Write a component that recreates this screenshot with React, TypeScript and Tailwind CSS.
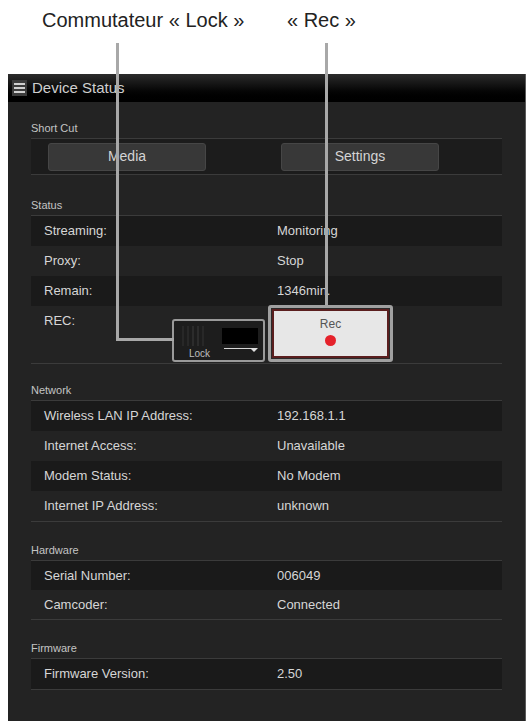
import React from 'react';

const font = { fontFamily: '"Liberation Sans", Arial, sans-serif' };

type Row = { label: string; value: string };

const SectionLabel = ({ title, top }: { title: string; top: string }) => (
    <div className={`h-[20px] ${top} flex items-center pl-[23px] text-[11px] text-[#c4c4c4]`}>
        {title}
    </div>
);

const InfoRows = ({ rows, rowH = 'h-[30px]' }: { rows: Row[]; rowH?: string }) => (
    <div className="mx-[23px] border-t border-b border-[#3b3b3b]">
        {rows.map((r, i) => (
            <div
                key={r.label}
                className={`${rowH} flex items-center text-[13px] text-[#d6d6d6] ${i % 2 === 0 ? 'bg-[#1a1a1a]' : ''}`}
            >
                <div className="w-[246px] pl-[13px]">{r.label}</div>
                <div>{r.value}</div>
            </div>
        ))}
    </div>
);

const LockSwitch = () => (
    <div className="relative w-[93px] h-[43px] mt-[13px] rounded-[3px] border-2 border-[#9a9a9a] bg-[#1d1d1d]">
        {/* faint stripes */}
        <div className="absolute left-[8px] top-[5px] w-[32px] h-[20px] flex gap-[3px] opacity-40">
            <div className="w-[2px] h-full bg-[#3a3a3a]" />
            <div className="w-[2px] h-full bg-[#3a3a3a]" />
            <div className="w-[2px] h-full bg-[#444]" />
            <div className="w-[2px] h-full bg-[#444]" />
            <div className="w-[2px] h-full bg-[#3a3a3a]" />
        </div>
        <div className="absolute left-[48px] top-[7px] w-[36px] h-[16px] bg-black" />
        <div className="absolute left-[50px] top-[27px] w-[30px] h-[1px] bg-[#d8d8d8]" />
        <svg className="absolute left-[76px] top-[25px]" width="8" height="6" viewBox="0 0 8 6">
            <polygon points="0,2 8,2 4,6" fill="#e0e0e0" />
        </svg>
        <div className="absolute left-[15px] top-[27px] text-[10px] text-[#bdbdbd] leading-[12px]">Lock</div>
    </div>
);

const RecButton = () => (
    <div className="w-[125px] h-[57px] -mt-[1px] ml-[3px] rounded-[3px] border-[3px] border-[#a0a0a0] p-[1px] bg-[#2a2a2a]">
        <div className="w-full h-full border-2 border-[#5b1f1f] bg-[#e7e7e7] flex flex-col items-center pt-[6px]">
            <div className="text-[12px] text-[#555] leading-[14px]">Rec</div>
            <div className="w-[11px] h-[11px] rounded-full bg-[#e5222b] mt-[4px]" />
        </div>
    </div>
);

export default function App() {
    const status: Row[] = [
        { label: 'Streaming:', value: 'Monitoring' },
        { label: 'Proxy:', value: 'Stop' },
        { label: 'Remain:', value: '1346min.' },
    ];
    const network: Row[] = [
        { label: 'Wireless LAN IP Address:', value: '192.168.1.1' },
        { label: 'Internet Access:', value: 'Unavailable' },
        { label: 'Modem Status:', value: 'No Modem' },
        { label: 'Internet IP Address:', value: 'unknown' },
    ];
    const hardware: Row[] = [
        { label: 'Serial Number:', value: '006049' },
        { label: 'Camcoder:', value: 'Connected' },
    ];
    const firmware: Row[] = [{ label: 'Firmware Version:', value: '2.50' }];

    return (
        <div className="relative w-[529px] h-[721px] bg-white overflow-hidden" style={font}>
            {/* Annotation titles */}
            <div className="h-[74px] relative text-[20px] leading-[20px] text-[#222]">
                <div className="absolute left-[42px] top-[10px]">Commutateur « Lock »</div>
                <div className="absolute left-[287px] top-[10px]">« Rec »</div>
            </div>

            {/* Device panel */}
            <div className="ml-[8px] w-[518px] h-[647px] bg-[#232323] border-r border-[#5a5a5a]">
                <div className="h-[28px] flex items-center gap-[5px] pl-[4px] bg-gradient-to-b from-[#2c2c2c] via-[#0c0c0c] to-black">
                    <div className="w-[15px] h-[16px] bg-[#3c3c3c] flex flex-col justify-center gap-[2px] px-[2px]">
                        <div className="h-[2px] bg-[#d0d0d0]" />
                        <div className="h-[2px] bg-[#d0d0d0]" />
                        <div className="h-[2px] bg-[#d0d0d0]" />
                    </div>
                    <div className="text-[15px] text-[#cfcfcf]">Device Status</div>
                </div>

                <SectionLabel title="Short Cut" top="mt-[16px]" />
                <div className="mx-[23px] h-[37px] border-t border-b border-[#3b3b3b] bg-[#1c1c1c] flex items-center pl-[17px]">
                    <div className="w-[158px] h-[28px] rounded-[3px] bg-[#383838] border border-[#464646] flex items-center justify-center text-[14px] text-[#d4d4d4]">
                        Media
                    </div>
                    <div className="w-[158px] h-[28px] ml-[75px] rounded-[3px] bg-[#383838] border border-[#464646] flex items-center justify-center text-[14px] text-[#d4d4d4]">
                        Settings
                    </div>
                </div>

                <SectionLabel title="Status" top="mt-[20px]" />
                <div className="mx-[23px] border-t border-b border-[#3b3b3b]">
                    {status.map((r, i) => (
                        <div
                            key={r.label}
                            className={`h-[30px] flex items-center text-[13px] text-[#d6d6d6] ${i % 2 === 0 ? 'bg-[#1a1a1a]' : ''}`}
                        >
                            <div className="w-[246px] pl-[13px]">{r.label}</div>
                            <div>{r.value}</div>
                        </div>
                    ))}
                    <div className="h-[57px] flex items-start text-[13px] text-[#d6d6d6]">
                        <div className="w-[141px] h-[30px] pl-[13px] flex items-center">REC:</div>
                        <LockSwitch />
                        <RecButton />
                    </div>
                </div>

                <SectionLabel title="Network" top="mt-[16px]" />
                <InfoRows rows={network} />

                <SectionLabel title="Hardware" top="mt-[18px]" />
                <InfoRows rows={hardware} rowH="h-[29px]" />

                <SectionLabel title="Firmware" top="mt-[18px]" />
                <InfoRows rows={firmware} />
            </div>

            {/* Callout lines */}
            <div className="absolute left-[116px] top-[43px] w-[3px] h-[298px] bg-[#a8a8a8]" />
            <div className="absolute left-[116px] top-[338px] w-[58px] h-[3px] bg-[#a8a8a8]" />
            <div className="absolute left-[325px] top-[43px] w-[3px] h-[262px] bg-[#a8a8a8]" />
        </div>
    );
}
